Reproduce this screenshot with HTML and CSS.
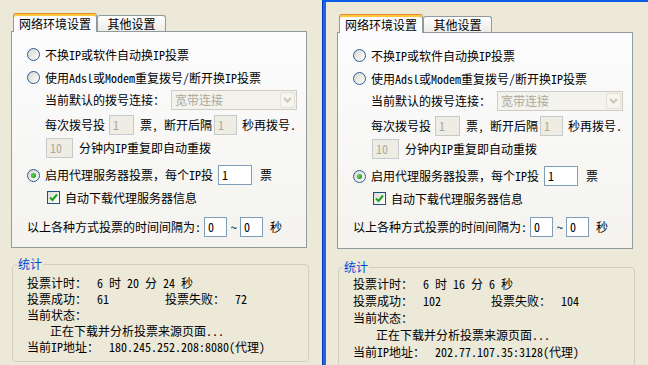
FILE: index.html
```html
<!DOCTYPE html>
<html lang="zh-CN">
<head>
<meta charset="utf-8">
<title>投票设置</title>
<link rel="stylesheet" href="styles.css">
</head>
<body>
<div class="screen">
  <section class="pane">
    <div class="tabs">
      <div class="tab tab-active">网络环境设置</div>
      <div class="tab tab-idle">其他设置</div>
    </div>
    <div class="panel">
      <div class="row opt"><span class="radio"></span><span>不换IP或软件自动换IP投票</span></div>
      <div class="row opt opt-2"><span class="radio"></span><span>使用Adsl或Modem重复拨号/断开换IP投票</span></div>
      <div class="row sub sub-conn"><span>当前默认的拨号连接：</span><div class="combo"><span>宽带连接</span><span class="combo-btn"><svg width="9" height="6" viewBox="0 0 9 6"><polyline points="1,1 4.5,4.5 8,1" fill="none" stroke="#C9C7BA" stroke-width="2"/></svg></span></div></div>
      <div class="row sub sub-dial"><span>每次拨号投</span><span class="edit dis e-a">1</span><span class="t-a">票, 断开后隔</span><span class="edit dis e-b">1</span><span class="t-b">秒再拨号.</span></div>
      <div class="row sub2"><span class="edit dis e-c">10</span><span class="t-c">分钟内IP重复即自动重拨</span></div>
      <div class="row opt opt-3"><span class="radio on"></span><span>启用代理服务器投票，每个IP投</span><span class="edit e-d">1</span><span class="t-d">票</span></div>
      <div class="row chk-row"><span class="check"><svg width="9" height="9" viewBox="0 0 9 9"><polyline points="1,4.5 3.5,7 8,1.5" fill="none" stroke="#21A121" stroke-width="2"/></svg></span><span>自动下载代理服务器信息</span></div>
      <div class="row interval"><span>以上各种方式投票的时间间隔为:</span><span class="edit e-i1">0</span><span class="t-tilde">~</span><span class="edit e-i2">0</span><span class="t-sec">秒</span></div>
    </div>
    <fieldset class="stats">
      <legend>统计</legend>
      <div class="st-rows">
        <div class="st-row"><span class="st-label">投票计时：</span><span>6 时 20 分 24 秒</span></div>
        <div class="st-row"><span class="st-label">投票成功：</span><span class="st-val">61</span><span class="st-label">投票失败：</span><span>72</span></div>
        <div class="st-row"><span>当前状态：</span></div>
        <div class="st-row st-status"><span>正在下载并分析投票来源页面...</span></div>
        <div class="st-row"><span class="st-ip">当前IP地址：</span><span>180.245.252.208:8080(代理)</span></div>
      </div>
    </fieldset>
  </section>

  <div class="window">
    <section class="pane pane-r">
      <div class="tabs">
        <div class="tab tab-active">网络环境设置</div>
        <div class="tab tab-idle">其他设置</div>
      </div>
      <div class="panel">
        <div class="row opt"><span class="radio"></span><span>不换IP或软件自动换IP投票</span></div>
        <div class="row opt opt-2"><span class="radio"></span><span>使用Adsl或Modem重复拨号/断开换IP投票</span></div>
        <div class="row sub sub-conn"><span>当前默认的拨号连接：</span><div class="combo"><span>宽带连接</span><span class="combo-btn"><svg width="9" height="6" viewBox="0 0 9 6"><polyline points="1,1 4.5,4.5 8,1" fill="none" stroke="#C9C7BA" stroke-width="2"/></svg></span></div></div>
        <div class="row sub sub-dial"><span>每次拨号投</span><span class="edit dis e-a">1</span><span class="t-a">票, 断开后隔</span><span class="edit dis e-b">1</span><span class="t-b">秒再拨号.</span></div>
        <div class="row sub2"><span class="edit dis e-c">10</span><span class="t-c">分钟内IP重复即自动重拨</span></div>
        <div class="row opt opt-3"><span class="radio on"></span><span>启用代理服务器投票，每个IP投</span><span class="edit e-d">1</span><span class="t-d">票</span></div>
        <div class="row chk-row"><span class="check"><svg width="9" height="9" viewBox="0 0 9 9"><polyline points="1,4.5 3.5,7 8,1.5" fill="none" stroke="#21A121" stroke-width="2"/></svg></span><span>自动下载代理服务器信息</span></div>
        <div class="row interval"><span>以上各种方式投票的时间间隔为:</span><span class="edit e-i1">0</span><span class="t-tilde">~</span><span class="edit e-i2">0</span><span class="t-sec">秒</span></div>
      </div>
      <fieldset class="stats">
        <legend>统计</legend>
        <div class="st-rows">
          <div class="st-row"><span class="st-label">投票计时：</span><span>6 时 16 分 6 秒</span></div>
          <div class="st-row"><span class="st-label">投票成功：</span><span class="st-val">102</span><span class="st-label">投票失败：</span><span>104</span></div>
          <div class="st-row"><span>当前状态：</span></div>
          <div class="st-row st-status"><span>正在下载并分析投票来源页面...</span></div>
          <div class="st-row"><span class="st-ip">当前IP地址：</span><span>202.77.107.35:3128(代理)</span></div>
        </div>
      </fieldset>
    </section>
  </div>
</div>
</body>
</html>
```

FILE: styles.css
```css
html, body {
  margin: 0;
  padding: 0;
  background: #ECE9D8;
}

body {
  font-family: "Noto Sans Mono CJK SC", "Noto Sans CJK SC", monospace;
  font-size: 12px;
  line-height: 12px;
  color: #000;
}

.screen {
  display: flex;
  width: 648px;
  height: 365px;
  overflow: hidden;
  background: #ECE9D8;
}

.pane {
  width: 322px;
  flex: none;
  box-sizing: border-box;
  padding: 13px 0 0 11px;
}

.window {
  flex: 1;
  border-top: 2px solid #0A5BE6;
  border-left: 1px solid #0832B8;
  box-shadow: inset 3px 0 #1C66E8;
}

.pane-r {
  padding: 12px 0 0 14px;
}

/* tabs */
.tabs {
  display: flex;
  align-items: flex-start;
  height: 19px;
  margin: 0 0 -1px 2px;
  position: relative;
  z-index: 1;
}

.tab {
  box-sizing: border-box;
  border: 1px solid #919B9C;
  border-bottom: 0;
  border-radius: 3px 3px 0 0;
  display: flex;
  justify-content: center;
  align-items: center;
  white-space: nowrap;
}

.tab-active {
  width: 84px;
  height: 19px;
  padding-top: 1px;
  background: #FCFCFE;
  border-top-color: #E68B2C;
  box-shadow: inset 0 2px #FFC73C;
}

.tab-idle {
  width: 69px;
  height: 16px;
  margin-top: 2px;
  background: linear-gradient(#FFFFFF, #ECEBE6);
}

/* panel */
.panel {
  width: 296px;
  box-sizing: border-box;
  border: 1px solid #919B9C;
  background: linear-gradient(#FCFCFE, #F4F3EE);
  padding: 13px 0 10px 0;
}

.row {
  display: flex;
  align-items: center;
  height: 20px;
  white-space: nowrap;
}

.opt { height: 19px; padding-left: 15px; }
.opt-2 { margin-top: 4px; }
.sub { padding-left: 33px; }
.sub-conn { margin-top: 3px; }
.sub-dial { margin-top: 5px; }
.sub2 { padding-left: 34px; margin-top: 3px; }
.opt-3 { height: 20px; margin-top: 7px; }
.chk-row { height: 19px; padding-left: 35px; margin-top: 3px; }
.interval { padding-left: 15px; margin-top: 10px; }

.pane-r .panel { padding-bottom: 11px; }
.pane-r .interval { margin-top: 9px; }

/* controls */
.radio {
  flex: none;
  width: 13px;
  height: 13px;
  box-sizing: border-box;
  border-radius: 50%;
  border: 1px solid #2F5B8A;
  background: linear-gradient(135deg, #D6D6CE, #FFFFFF);
  margin-right: 5px;
  display: grid;
  place-items: center;
}

.radio.on::after {
  content: "";
  width: 5px;
  height: 5px;
  border-radius: 50%;
  background: radial-gradient(circle at 40% 40%, #5FD35F, #21A121 70%);
}

.check {
  flex: none;
  width: 13px;
  height: 13px;
  box-sizing: border-box;
  border: 1px solid #1C5180;
  background: linear-gradient(135deg, #DCDCD7, #FFFFFF);
  margin-right: 5px;
  display: grid;
  place-items: center;
}

.check svg { display: block; }

.edit {
  flex: none;
  box-sizing: border-box;
  height: 20px;
  border: 1px solid #7F9DB9;
  background: #FFFFFF;
  padding-left: 3px;
  display: flex;
  align-items: center;
}

.edit.dis {
  border-color: #C5CACB;
  background: #EEECE3;
  color: #ACA899;
}

.combo {
  flex: none;
  width: 126px;
  height: 20px;
  margin-left: 6px;
  box-sizing: border-box;
  border: 1px solid #CFCDC2;
  background: #F3F2EC;
  color: #ACA899;
  display: flex;
  align-items: center;
  padding-left: 3px;
}

.combo-btn {
  margin-left: auto;
  margin-right: 1px;
  width: 15px;
  height: 16px;
  box-sizing: border-box;
  border: 1px solid #E3E1D6;
  border-radius: 2px;
  background: #F5F4EF;
  display: grid;
  place-items: center;
}

.combo-btn svg { display: block; }

.e-a { width: 25px; margin-left: 4px; }
.t-a { margin-left: 6px; }
.e-b { width: 23px; margin-left: 2px; }
.t-b { margin-left: 5px; }
.e-c { width: 27px; }
.t-c { margin-left: 6px; }
.e-d { width: 34px; margin-left: 5px; }
.t-d { margin-left: 8px; }
.e-i1 { width: 23px; margin-left: 3px; }
.t-tilde { margin-left: 4px; }
.e-i2 { width: 23px; margin-left: 3px; }
.t-sec { margin-left: 7px; }

/* stats group */
.stats {
  margin: 10px 0 0 1px;
  width: 297px;
  min-width: 0;
  box-sizing: border-box;
  border: 1px solid #D0D0BF;
  border-radius: 4px;
  padding: 0 0 6px 0;
}

.stats legend {
  margin-left: 4px;
  padding: 0 1px;
  color: #0046D5;
  line-height: 12px;
}

.st-rows { padding: 5px 0 0 14px; }

.st-row {
  display: flex;
  align-items: center;
  height: 16px;
  white-space: nowrap;
}

.st-label { width: 70px; flex: none; }
.st-val { width: 68px; flex: none; }
.st-ip { width: 82px; flex: none; }
.st-status { padding-left: 23px; }

.pane-r .stats { margin-top: 12px; }
.pane-r .st-rows { padding-top: 2px; }
.pane-r .st-row { height: 17px; }
```
